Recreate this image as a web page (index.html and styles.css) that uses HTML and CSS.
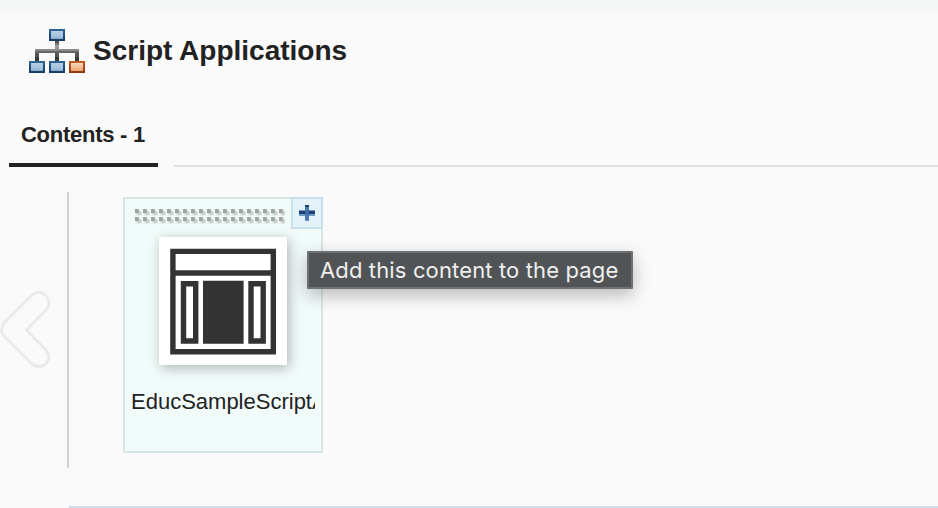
FILE: index.html
```html
<!DOCTYPE html>
<html lang="en">
<head>
<meta charset="utf-8">
<title>Script Applications</title>
<link rel="stylesheet" href="styles.css">
</head>
<body>
<header class="header">
  <svg class="logo" width="56" height="44" viewBox="0 0 56 44" shape-rendering="crispEdges">
    <defs>
      <linearGradient id="edge" x2="0" y2="1"><stop stop-color="#2d6794"/><stop offset="1" stop-color="#163763"/></linearGradient>
      <linearGradient id="blue" x2="0" y2="1"><stop stop-color="#b9cfe7"/><stop offset=".65" stop-color="#a2c1dd"/><stop offset="1" stop-color="#86adca"/></linearGradient>
      <linearGradient id="rust" x2="0" y2="1"><stop stop-color="#c85b24"/><stop offset="1" stop-color="#913516"/></linearGradient>
      <linearGradient id="peach" x2="0" y2="1"><stop stop-color="#f8d9c2"/><stop offset="1" stop-color="#eca66a"/></linearGradient>
      <g id="node"><path fill="url(#edge)" d="M0 0h16v12H0z"/><path fill="url(#blue)" d="M2 2h12v8H2z"/></g>
    </defs>
    <path fill="#555" d="M26 12h4v2h-4z"/><path fill="#777" d="M26 14h4v2h-4z"/><path fill="#999" d="M26 16h4v4h-4z"/>
    <path fill="#8b8b8b" d="M6 20h44v2H6z"/><path fill="#676767" d="M6 22h44v2H6z"/>
    <path fill="#555" d="M6 24h4v4H6zM26 24h4v4h-4zM46 24h4v4h-4z"/>
    <path fill="#383838" d="M6 28h4v4H6zM26 28h4v4h-4zM46 28h4v4h-4z"/>
    <use href="#node" x="20"/><use href="#node" y="32"/><use href="#node" x="20" y="32"/>
    <path fill="url(#rust)" d="M40 32h16v12H40z"/><path fill="url(#peach)" d="M42 34h12v8H42z"/>
  </svg>
  <h1 class="title">Script Applications</h1>
  <div class="dropzone"></div>
</header>
<nav class="tabs">
  <div class="tab"><span class="tab-label">Contents - 1</span></div>
  <div class="tab-rule"></div>
</nav>
<main class="shelf">
  <svg class="prev" width="51" height="78" viewBox="0 0 51 78">
    <path d="M31 5C37-1 43 1 46 5Q52 12 46 19L26.5 39L46 59Q51 66 47 71C43 77 36 77 31 72L4 45Q-1 39 4 32Z" fill="none" stroke="#e9e9e9" stroke-width="2.6" stroke-linejoin="round"/>
  </svg>
  <section class="items">
    <article class="card">
      <svg class="grip" width="150" height="15">
        <defs>
          <filter id="soft" x="-1" y="-1" width="3" height="3"><feGaussianBlur stdDeviation="1"/></filter>
          <pattern id="dots" width="8" height="8" patternUnits="userSpaceOnUse">
            <path d="M2 2h4v4H2z" fill="#b5bbba" filter="url(#soft)"/>
            <path d="M0 0h3.6v4H0z" fill="#a0a0a0"/>
          </pattern>
        </defs>
        <rect width="150" height="15" fill="url(#dots)"/>
      </svg>
      <div class="add">
        <svg width="16" height="16" viewBox="0 0 16 16" shape-rendering="crispEdges">
          <path fill="#6e9acb" d="M6 0h4v16H6zM0 5h16v6H0z"/>
          <path fill="#4b79b4" d="M6 2h4v13H6z"/>
          <path fill="#1f416f" d="M6 0h4v2H6zM0 6h16v3H0z"/>
          <path fill="#3f6ba6" d="M6 5h4v5H6z"/>
        </svg>
      </div>
      <svg class="thumb" width="128" height="128" viewBox="0 0 128 128">
        <g fill="none" stroke="#333" stroke-width="5.4">
          <path d="M13.9 14.4h100.4v100.4H13.9zM14 36h100M24.5 46.7h12.2v57.3h-12.2zM92 46.7h12.2v57.3h-12.2z"/>
        </g>
        <path fill="#333" d="M44 43.8h40.6v63H44z"/>
      </svg>
      <div class="name">EducSampleScriptA</div>
      <div class="tooltip">Add this content to the page</div>
    </article>
  </section>
</main>
<div class="bottom-rule"></div>
</body>
</html>
```
FILE: styles.css
```css
* { box-sizing: border-box; }
body {
  margin: 0;
  height: 508px;
  overflow: hidden;
  background: linear-gradient(#f5f8f7 0 10px, #f9f9f9 10px 15px, #fafafa 15px);
  color: #222;
  font-family: "Liberation Sans", Arial, sans-serif;
}
svg { display: block; }
.header {
  position: relative;
  display: flex;
  align-items: flex-start;
  gap: 8px;
  height: 110px;
  padding: 29px 0 0 29px;
}
.title {
  margin: 6px 0 0;
  font-size: 28px;
  line-height: 32px;
  white-space: nowrap;
}
.dropzone {
  position: absolute;
  left: 126px;
  right: -2px;
  top: 36px;
  height: 44px;
  border: 1px dashed #f6f6f6;
}
.tabs {
  display: flex;
  align-items: flex-end;
  gap: 16px;
  height: 57px;
  padding-left: 9px;
}
.tab {
  width: 149px;
  height: 57px;
  padding: 12px 0 0 12px;
  border-bottom: 4px solid #222;
}
.tab-label {
  display: block;
  font-size: 22px;
  font-weight: bold;
  line-height: 25px;
  letter-spacing: -.27px;
  white-space: nowrap;
}
.tab-rule { flex: 1; height: 2px; background: #e0e0e0; }
.shelf {
  display: flex;
  align-items: flex-start;
  height: 301px;
  margin-top: 25px;
}
.prev { margin: 99px 16px 0 0; }
.items {
  height: 276px;
  padding: 5px 0 0 54px;
  border-left: 2px solid #d0d0d0;
}
.card {
  position: relative;
  width: 200px;
  height: 256px;
  padding: 10px 6px 0;
  border: 2px solid #d9e6e8;
  background: #f1fbfa;
}
.grip { margin-left: 4px; }
.add {
  position: absolute;
  top: -2px;
  right: -2px;
  display: grid;
  place-items: center;
  width: 32px;
  height: 32px;
  border: 2px solid #cbdfea;
  background: #e4f3fa;
}
.thumb {
  margin: 13px 0 0 28px;
  background: #fff;
  box-shadow: 2px 3px 12px rgba(0, 0, 0, .28);
}
.name {
  width: 184px;
  margin-top: 24px;
  overflow: hidden;
  font-size: 22px;
  line-height: 26px;
  white-space: nowrap;
}
.tooltip {
  position: absolute;
  left: 182px;
  top: 52px;
  width: 326px;
  height: 38px;
  padding-left: 11px;
  border: 2px solid #6e7071;
  border-radius: 1px;
  background: #505456;
  box-shadow: 0 6px 18px rgba(0, 0, 0, .27);
  color: #efefef;
  font: 22px/34px Inter, sans-serif;
  letter-spacing: .14px;
  white-space: nowrap;
}
.bottom-rule { height: 2px; margin: 13px 0 0 69px; background: #cbe0e8; }
```
